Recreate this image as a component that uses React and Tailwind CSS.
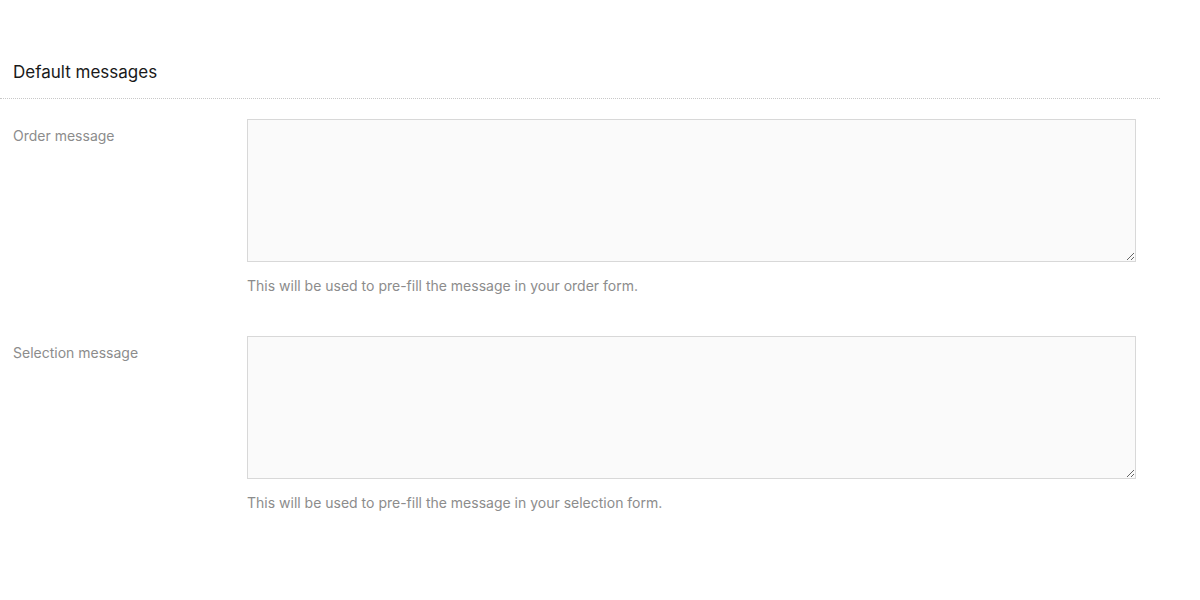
import { useState } from 'react';

const fields = [
  { id: 'order', label: 'Order message', help: 'This will be used to pre-fill the message in your order form.' },
  { id: 'selection', label: 'Selection message', help: 'This will be used to pre-fill the message in your selection form.' }
];

export default function App() {
  const [values, setValues] = useState({ order: '', selection: '' });

  return (
    <div className="min-h-[600px] bg-white font-['Inter',sans-serif]">
      <div className="w-[1160px]">
        <div className="flex h-[98px] items-end pb-[15px] pl-[13px]">
          <h2 className="text-[17px] leading-[22px] text-[#1a1a1a]">Default messages</h2>
        </div>
        <div className="border-t border-dotted border-[#c8c8c8]" />
        <div className="pt-[20px]">
          {fields.map((field) => (
            <div key={field.id} className="mb-[41px] flex">
              <label htmlFor={field.id} className="w-[247px] shrink-0 pl-[13px] pt-[8px] text-[14px] leading-[18px] text-[#8c8c8c]">
                {field.label}
              </label>
              <div className="w-[889px]">
                <textarea
                  id={field.id}
                  value={values[field.id]}
                  onChange={(e) => setValues((prev) => ({ ...prev, [field.id]: e.target.value }))}
                  className="block h-[143px] w-full resize-y border-[1.5px] border-[#d8d8d8] bg-[#fafafa] p-2 text-[14px] outline-none"
                />
                <p className="mt-[15px] text-[14px] leading-[18px] text-[#8c8c8c]">{field.help}</p>
              </div>
            </div>
          ))}
        </div>
      </div>
    </div>
  );
}
